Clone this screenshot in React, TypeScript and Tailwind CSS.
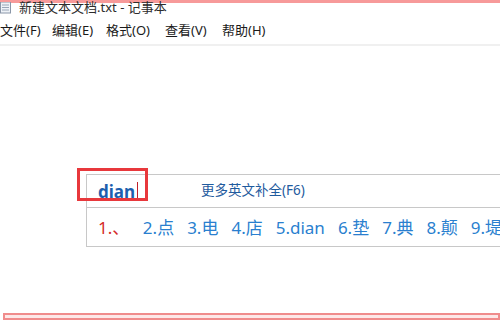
import React from 'react';

const candidates = ['2.点', '3.电', '4.店', '5.dian', '6.垫', '7.典', '8.颠', '9.堤'];

const NotepadIcon = () => (
  <svg width="12" height="12" viewBox="0 0 12 12" className="shrink-0">
    <rect x="0.5" y="0" width="10" height="11" fill="#eef2f7" stroke="#8a96a8" />
    <line x1="2" y1="3" x2="9" y2="3" stroke="#9aa6b8" />
    <line x1="2" y1="5.5" x2="9" y2="5.5" stroke="#9aa6b8" />
    <line x1="2" y1="8" x2="9" y2="8" stroke="#9aa6b8" />
  </svg>
);

const App: React.FC = () => {
  return (
    <div
      className="relative w-[500px] h-[320px] bg-white overflow-hidden"
      style={{ fontFamily: '"Noto Sans", "Noto Sans CJK SC", sans-serif' }}
    >
      {/* Title bar */}
      <div className="h-[3px] w-full bg-[#f79a9a]" />
      <div className="flex items-center gap-[7px] h-[12px] -mt-[1px]">
        <NotepadIcon />
        <span className="text-[13px] leading-[12px] text-[#2c2c2c] -mt-[3px]">新建文本文档.txt - 记事本</span>
      </div>

      {/* Menu bar */}
      <div className="flex items-center h-[26px] mt-[4px] text-[13px] text-[#1a1a1a]">
        <span className="w-[52px]">文件(F)</span>
        <span className="w-[54px]">编辑(E)</span>
        <span className="w-[59px]">格式(O)</span>
        <span className="w-[57px]">查看(V)</span>
        <span>帮助(H)</span>
      </div>
      <div className="h-[2px] w-full bg-[#f0f0f0]" />

      {/* IME candidate window */}
      <div className="absolute left-[86px] top-[174px] w-[430px] h-[73px] border border-[#c8c8c8] bg-white flex flex-col">
        <div className="h-[33px] flex items-center border-b border-[#c8c8c8]">
          <span className="ml-[11px] text-[17px] font-bold text-[#1d5fae] leading-none">dian</span>
          <span className="ml-[2px] w-[1px] h-[19px] bg-[#c0202a]" />
          <span className="ml-[63px] text-[13.5px] text-[#1f5b9e] leading-none">更多英文补全(F6)</span>
        </div>
        <div className="flex-1 flex items-center text-[17px] text-[#2a7fcf] leading-none whitespace-nowrap">
          <span className="ml-[11px] w-[45px] text-[#d42a2a]">1.、</span>
          {candidates.map((c) => (
            <span key={c} className="mr-[13px]">
              {c}
            </span>
          ))}
        </div>
      </div>

      {/* Annotation box */}
      <div className="absolute left-[77px] top-[168px] w-[71px] h-[33px] border-[3px] border-[#e8383c]" />

      {/* Bottom edge */}
      <div className="absolute left-[3px] right-0 top-[313px] h-[7px] border-[2px] border-[#f08c8c] bg-[#fde8e8]" />
    </div>
  );
};

export default App;
